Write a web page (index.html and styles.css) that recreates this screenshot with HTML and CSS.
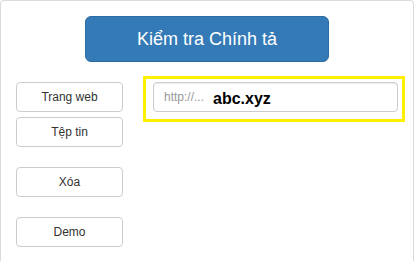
FILE: index.html
```html
<!DOCTYPE html>
<html lang="vi">
<head>
<meta charset="utf-8">
<title>Kiểm tra Chính tả</title>
<link rel="stylesheet" href="styles.css">
</head>
<body>
<div class="frame">
  <div class="top">
    <button class="btn-primary">Kiểm tra Chính tả</button>
  </div>
  <div class="row">
    <div class="side">
      <button class="btn">Trang web</button>
      <button class="btn">Tệp tin</button>
      <button class="btn">Xóa</button>
      <button class="btn btn-last">Demo</button>
    </div>
    <div class="main">
      <div class="field">
        <span class="placeholder">http://...</span>
        <span class="value">abc.xyz</span>
      </div>
      <div class="highlight"></div>
    </div>
  </div>
</div>
</body>
</html>
```

FILE: styles.css
```css
html, body {
  margin: 0;
  padding: 0;
  background: #fff;
  overflow: hidden;
}
body {
  font-family: "Liberation Sans", Arial, sans-serif;
  color: #333;
}
.frame {
  box-sizing: border-box;
  width: 414px;
  height: 261px;
  border: 1px solid #dcdcdc;
  border-bottom: none;
  border-radius: 4px 4px 0 0;
  padding-top: 15px;
}
.top {
  display: flex;
  justify-content: center;
}
.btn-primary {
  box-sizing: border-box;
  width: 244px;
  height: 46px;
  margin: 0;
  padding: 0;
  background: #337ab7;
  border: 1px solid #2e6da4;
  border-radius: 6px;
  color: #fff;
  font-family: "Liberation Sans", Arial, sans-serif;
  font-size: 18px;
  line-height: 44px;
}
.row {
  display: flex;
  margin-top: 20px;
}
.side {
  display: flex;
  flex-direction: column;
  margin-left: 15px;
  width: 107px;
}
.btn {
  box-sizing: border-box;
  width: 107px;
  height: 30px;
  margin: 0 0 20px 0;
  padding: 0;
  background: #fff;
  border: 1px solid #ccc;
  border-radius: 4px;
  color: #333;
  font-family: "Liberation Sans", Arial, sans-serif;
  font-size: 12px;
  line-height: 28px;
}
.btn:first-child {
  margin-bottom: 5px;
}
.btn-last {
  margin-bottom: 0;
}
.main {
  position: relative;
  margin-left: 30px;
}
.field {
  box-sizing: border-box;
  width: 245px;
  height: 30px;
  border: 1px solid #ccc;
  border-radius: 4px;
  box-shadow: inset 0 1px 1px rgba(0,0,0,0.075);
  display: flex;
  align-items: center;
  padding-left: 10px;
}
.placeholder {
  color: #999;
  font-size: 12px;
}
.value {
  margin-left: 9px;
  margin-top: 3px;
  color: #000;
  font-weight: bold;
  font-size: 16px;
}
.highlight {
  position: absolute;
  left: -10px;
  top: -6px;
  width: 262px;
  height: 46px;
  box-sizing: border-box;
  border: 3px solid #fff000;
  pointer-events: none;
}
```
